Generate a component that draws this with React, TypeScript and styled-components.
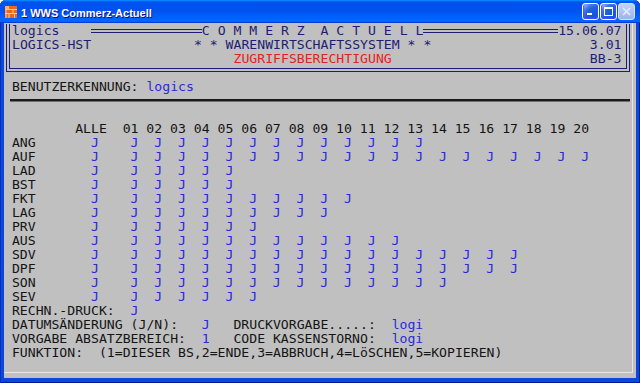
import styled, { createGlobalStyle } from 'styled-components'

const NAVY = '#1d1d72'
const BLUE = '#2a2ad6'
const INK = '#141414'
const RED = '#e42222'

const GlobalStyle = createGlobalStyle`
  html, body {
    margin: 0;
    padding: 0;
    background: #fff;
  }
  body {
    width: 640px;
    height: 383px;
    overflow: hidden;
  }
`

const Window = styled.div`
  display: flex;
  flex-direction: column;
  width: 640px;
  height: 383px;
  overflow: hidden;
  background: #0848dc;
  border-radius: 6px 6px 0 0;
  box-shadow: inset 1px 0 #0a2fb4, inset -1px 0 #001a9c, inset 0 -1px #001a9c;
`

const TitleBar = styled.div`
  display: flex;
  align-items: center;
  height: 23px;
  padding: 0 5px;
  background: linear-gradient(
    180deg,
    #0997ff,
    #0053ee 8%,
    #0050ee 40%,
    #0066ff 88%,
    #0066ff 93%,
    #005bff 95%,
    #003dd7 96%,
    #003dd7
  );
`

const Caption = styled.span`
  margin-left: 4px;
  padding-top: 2px;
  font-family: 'Liberation Sans', 'DejaVu Sans', sans-serif;
  font-size: 11px;
  font-weight: bold;
  color: #fff;
  text-shadow: 1px 1px #0f1089;
  white-space: nowrap;
`

const Controls = styled.div`
  display: flex;
  gap: 1px;
  margin-left: auto;
`

const CtrlButton = styled.div<{ $disabled?: boolean }>`
  display: flex;
  align-items: center;
  justify-content: center;
  width: 17px;
  height: 17px;
  box-sizing: border-box;
  border-radius: 3px;
  border: 1px solid ${(p) => (p.$disabled ? '#d6e0fa' : '#fff')};
  background: ${(p) =>
    p.$disabled
      ? 'linear-gradient(180deg, #c3d2f6, #9cb4ec)'
      : 'radial-gradient(circle at 90% 90%, #0054e9 0%, #2263d5 55%, #4479e4 70%, #a3bbec 90%, #fff 100%)'};
  box-shadow: ${(p) => (p.$disabled ? 'none' : 'inset 0 -1px 2px 1px #4646ff')};
`

const Body = styled.div`
  flex: 1;
  display: flex;
  margin: 0 4px 5px;
  padding: 0 3px 5px 0;
  background: #c0c0c0;
  min-height: 0;
`

const Screen = styled.div`
  flex: 1;
  overflow: hidden;
  padding-top: 1px;
  border-right: 1px solid #ece2ea;
  border-bottom: 1px solid #ece2ea;
  font-family: 'DejaVu Sans Mono', 'Liberation Mono', monospace;
  font-size: 13.15px;
  line-height: 14px;
  color: ${INK};
`

const Line = styled.div<{ $col?: number }>`
  height: 14px;
  padding-left: ${(p) => p.$col ?? 0}ch;
  white-space: pre;
`

const Frame = styled.div`
  margin: 7px 2px 8px 2px;
  padding: 0 4.5px 2px 2px;
  border: 4px double ${NAVY};
  border-top: none;
  color: ${NAVY};
`

const FrameRow = styled.div`
  display: grid;
  grid-template-columns: 23ch 30ch 1fr;
  height: 14px;
  white-space: pre;
`

const TopRow = styled(FrameRow)`
  margin-top: -7px;
`

const Cell = styled.div<{ $align?: 'left' | 'center' | 'right' }>`
  display: flex;
  align-items: center;
  justify-content: ${(p) =>
    p.$align === 'right' ? 'flex-end' : p.$align === 'center' ? 'center' : 'flex-start'};
`

const DoubleRule = styled.span<{ $gap?: number }>`
  flex: 1;
  height: 2px;
  margin-left: ${(p) => p.$gap ?? 0}ch;
  border-top: 1px solid ${NAVY};
  border-bottom: 1px solid ${NAVY};
`

const Alert = styled.span`
  color: ${RED};
`

const Value = styled.span`
  color: ${BLUE};
`

const Separator = styled.div`
  height: 2px;
  margin: 5px 2px 20px 6px;
  background: #1b1b1b;
  border-bottom: 1px solid #6e6e6e;
`

const Matrix = styled.div`
  display: grid;
  grid-template-columns: 8ch 6ch repeat(20, 3ch);
  grid-auto-rows: 14px;
  padding-left: 1ch;
  white-space: pre;
`

const Mark = styled.span<{ $indent: number }>`
  padding-left: ${(p) => p.$indent}ch;
  color: ${BLUE};
`

const FieldRow = styled.div`
  display: grid;
  grid-template-columns: 24ch 4ch 20ch auto;
  height: 14px;
  padding-left: 1ch;
  white-space: pre;
`

const AppIcon = () => (
  <svg width="12" height="12" viewBox="0 0 12 12">
    <rect width="12" height="12" fill="#f0651c" />
    <path d="M0 3.5h12M0 7.5h12M3.5 0v3.5M8 3.5v4M4 7.5v4.5M9.5 7.5v4.5M1 0v12" stroke="#ffd7a0" strokeWidth="0.9" />
    <rect x="0" y="0" width="3.5" height="3.5" fill="#ffb066" />
  </svg>
)

const MinGlyph = () => (
  <svg width="11" height="11" viewBox="0 0 11 11">
    <rect x="2" y="7" width="5" height="2" fill="#fff" />
  </svg>
)

const MaxGlyph = () => (
  <svg width="11" height="11" viewBox="0 0 11 11">
    <rect x="1.5" y="1.5" width="8" height="8" fill="none" stroke="#fff" strokeWidth="1" />
    <rect x="1" y="1" width="9" height="2" fill="#fff" />
  </svg>
)

const CloseGlyph = () => (
  <svg width="11" height="11" viewBox="0 0 11 11">
    <path d="M2 2l7 7M9 2l-7 7" stroke="#e4ebfb" strokeWidth="1.6" />
  </svg>
)

const columns = Array.from({ length: 20 }, (_, i) => String(i + 1).padStart(2, '0'))

const rights: [string, number][] = [
  ['ANG', 13],
  ['AUF', 20],
  ['LAD', 5],
  ['BST', 5],
  ['FKT', 10],
  ['LAG', 9],
  ['PRV', 6],
  ['AUS', 12],
  ['SDV', 17],
  ['DPF', 17],
  ['SON', 14],
  ['SEV', 6],
]

const App = () => {
  return (
    <>
      <GlobalStyle />
      <Window>
        <TitleBar>
          <AppIcon />
          <Caption>1 WWS Commerz-Actuell</Caption>
          <Controls>
            <CtrlButton>
              <MinGlyph />
            </CtrlButton>
            <CtrlButton>
              <MaxGlyph />
            </CtrlButton>
            <CtrlButton $disabled>
              <CloseGlyph />
            </CtrlButton>
          </Controls>
        </TitleBar>
        <Body>
          <Screen>
            <Frame>
              <TopRow>
                <Cell>
                  logics
                  <DoubleRule $gap={4} />
                </Cell>
                <Cell $align="center">
                  <DoubleRule />
                  {'C O M M E R Z  A C T U E L L'}
                  <DoubleRule />
                </Cell>
                <Cell $align="right">
                  <DoubleRule />
                  15.06.07
                </Cell>
              </TopRow>
              <FrameRow>
                <Cell>LOGICS-HST</Cell>
                <Cell $align="center">* * WARENWIRTSCHAFTSSYSTEM * *</Cell>
                <Cell $align="right">3.01</Cell>
              </FrameRow>
              <FrameRow>
                <Cell />
                <Cell $align="center">
                  <Alert>ZUGRIFFSBERECHTIGUNG</Alert>
                </Cell>
                <Cell $align="right">BB-3</Cell>
              </FrameRow>
            </Frame>

            <Line $col={1}>
              BENUTZERKENNUNG: <Value>logics</Value>
            </Line>
            <Separator />

            <Matrix>
              <span />
              <span>ALLE</span>
              {columns.map((c) => (
                <span key={c}>{c}</span>
              ))}
              {rights.map(([label, count]) => [
                <span key={label}>{label}</span>,
                <Mark key={label + '-alle'} $indent={2}>
                  J
                </Mark>,
                ...columns.map((c, i) =>
                  i < count ? (
                    <Mark key={label + c} $indent={1}>
                      J
                    </Mark>
                  ) : (
                    <span key={label + c} />
                  ),
                ),
              ])}
            </Matrix>

            <Line $col={1}>
              {'RECHN.-DRUCK:  '}
              <Value>J</Value>
            </Line>
            <FieldRow>
              <span>DATUMSÄNDERUNG (J/N):</span>
              <Value>J</Value>
              <span>DRUCKVORGABE.....:</span>
              <Value>logi</Value>
            </FieldRow>
            <FieldRow>
              <span>VORGABE ABSATZBEREICH:</span>
              <Value>1</Value>
              <span>CODE KASSENSTORNO:</span>
              <Value>logi</Value>
            </FieldRow>
            <Line $col={1}>
              {'FUNKTION:  (1=DIESER BS,2=ENDE,3=ABBRUCH,4=LöSCHEN,5=KOPIEREN)'}
            </Line>
          </Screen>
        </Body>
      </Window>
    </>
  )
}

export default App
